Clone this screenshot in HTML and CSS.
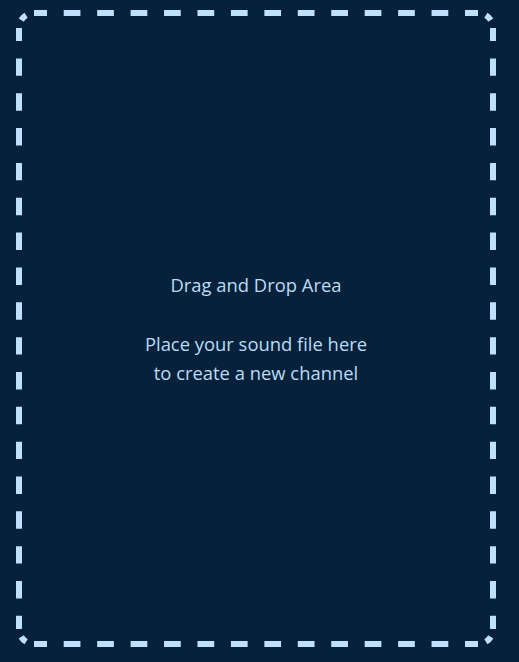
FILE: index.html
```html
<!DOCTYPE html>
<html>
<head>
<meta charset="utf-8">
<link rel="stylesheet" href="styles.css">
</head>
<body>
<div class="page">
  <div class="dropzone">
    <svg class="dash-frame" viewBox="16 10 480 637" preserveAspectRatio="none" aria-hidden="true">
      <g class="dash-stroke">
        <line class="edge-h" x1="34" y1="13" x2="478" y2="13"/>
        <line class="edge-h" x1="34" y1="644" x2="478" y2="644"/>
        <line class="edge-v" x1="19" y1="28" x2="19" y2="629"/>
        <line class="edge-v" x1="493" y1="28" x2="493" y2="629"/>
        <path d="M21.2 20.1 A15 15 0 0 1 26.1 15.2"/>
        <path d="M485.9 15.2 A15 15 0 0 1 490.8 20.1"/>
        <path d="M21.2 636.9 A15 15 0 0 0 26.1 641.8"/>
        <path d="M485.9 641.8 A15 15 0 0 0 490.8 636.9"/>
      </g>
    </svg>
    <p class="label">Drag and Drop Area<br><br>Place your sound file here<br>to create a new channel</p>
  </div>
</div>
</body>
</html>
```
FILE: styles.css
```css
html, body {
  margin: 0;
  padding: 0;
  background: #07213b;
  height: 100%;
}
.page {
  box-sizing: border-box;
  height: 662px;
  padding: 10px 23px 15px 16px;
  display: flex;
}
.dropzone {
  position: relative;
  flex: 1;
  display: flex;
  align-items: center;
  justify-content: center;
}
.dash-frame {
  position: absolute;
  inset: 0;
  width: 100%;
  height: 100%;
}
.dash-stroke {
  fill: none;
  stroke: #bfe0fa;
  stroke-width: 6;
  stroke-linecap: butt;
}
.edge-h {
  stroke-dasharray: 16.72 16.72;
  stroke-dashoffset: 3.72;
}
.edge-v {
  stroke-dasharray: 17.42 17.42;
  stroke-dashoffset: 4.42;
}
.label {
  position: relative;
  margin: 0;
  text-align: center;
  color: #b9ddf7;
  font-family: "Open Sans", "Noto Sans", sans-serif;
  font-size: 18.4px;
  line-height: 29.5px;
}
```
